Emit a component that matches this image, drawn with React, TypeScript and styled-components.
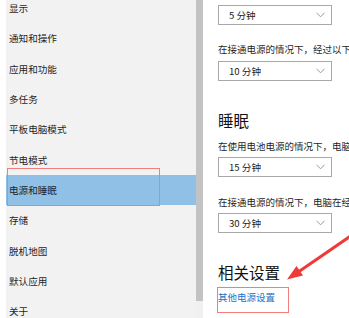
import styled, { createGlobalStyle } from "styled-components";

const GlobalStyle = createGlobalStyle`
  html, body {
    margin: 0;
    padding: 0;
    background: #fff;
  }
  body {
    font-family: "Noto Sans CJK SC", "Noto Sans", sans-serif;
    overflow: hidden;
  }
`;

const Page = styled.div`
  position: relative;
  display: flex;
  width: 349px;
  height: 318px;
  overflow: hidden;
  background: #fff;
`;

const Sidebar = styled.div`
  display: flex;
  flex-shrink: 0;
  height: 100%;
  padding-left: 6px;
  background: #fff;
`;

const NavList = styled.ul`
  list-style: none;
  margin: 0;
  padding: 0;
  width: 190px;
  height: 100%;
  background: #f2f2f2;
  display: flex;
  flex-direction: column;
`;

const NavItem = styled.li<{ $active?: boolean }>`
  flex-shrink: 0;
  height: 30.3px;
  display: flex;
  align-items: center;
  padding-left: 3px;
  font-size: 9.6px;
  color: #1f1f1f;
  background: ${({ $active }) => ($active ? "#90c0e6" : "transparent")};

  &:first-child {
    margin-top: -7px;
  }
`;

const ScrollTrack = styled.div`
  width: 7px;
  height: 100%;
  background: #f0f0f0;
`;

const ScrollThumb = styled.div`
  width: 100%;
  height: 301px;
  background: #c3c3c3;
`;

const Content = styled.div`
  flex: 1;
  min-width: 0;
  padding-left: 15px;
  display: flex;
  flex-direction: column;
  white-space: nowrap;
`;

const Dropdown = styled.div<{ $top: number }>`
  box-sizing: border-box;
  margin-top: ${({ $top }) => $top}px;
  width: 114px;
  height: 20px;
  flex-shrink: 0;
  border: 1.5px solid #a8a8a8;
  display: flex;
  align-items: center;
  justify-content: space-between;
  padding: 0 6px 0 10px;
  font-size: 9.6px;
  color: #222;
`;

const Desc = styled.div<{ $top: number }>`
  margin-top: ${({ $top }) => $top}px;
  height: 14px;
  line-height: 14px;
  font-size: 9.5px;
  color: #1f1f1f;
`;

const Heading = styled.h2`
  margin: 28px 0 0;
  height: 22px;
  line-height: 22px;
  font-size: 15.5px;
  font-weight: 400;
  color: #111;
`;

const Link = styled.a`
  margin-top: 7px;
  height: 14px;
  line-height: 14px;
  font-size: 9.5px;
  color: #1b6fc4;
  text-decoration: none;
`;

const Mark = styled.div<{ $x: number; $y: number; $w: number; $h: number }>`
  position: absolute;
  left: ${({ $x }) => $x}px;
  top: ${({ $y }) => $y}px;
  width: ${({ $w }) => $w}px;
  height: ${({ $h }) => $h}px;
  box-sizing: border-box;
  border: 1.5px solid #f17d7d;
  pointer-events: none;
`;

const Overlay = styled.svg`
  position: absolute;
  left: 0;
  top: 0;
  pointer-events: none;
`;

const Chevron = () => (
  <svg width="9" height="6" viewBox="0 0 9 6">
    <path d="M0.5 0.8 L4.5 4.8 L8.5 0.8" fill="none" stroke="#9a9a9a" strokeWidth="1" />
  </svg>
);

const nav = [
  "显示",
  "通知和操作",
  "应用和功能",
  "多任务",
  "平板电脑模式",
  "节电模式",
  "电源和睡眠",
  "存储",
  "脱机地图",
  "默认应用",
  "关于",
];

export default function App() {
  return (
    <>
      <GlobalStyle />
      <Page>
        <Sidebar>
          <NavList>
            {nav.map((label) => (
              <NavItem key={label} $active={label === "电源和睡眠"}>
                {label}
              </NavItem>
            ))}
          </NavList>
          <ScrollTrack>
            <ScrollThumb />
          </ScrollTrack>
        </Sidebar>

        <Content>
          <Dropdown $top={5}>
            5 分钟
            <Chevron />
          </Dropdown>
          <Desc $top={17}>在接通电源的情况下，经过以下</Desc>
          <Dropdown $top={5}>
            10 分钟
            <Chevron />
          </Dropdown>

          <Heading>睡眠</Heading>
          <Desc $top={8}>在使用电池电源的情况下，电脑</Desc>
          <Dropdown $top={4}>
            15 分钟
            <Chevron />
          </Dropdown>
          <Desc $top={18}>在接通电源的情况下，电脑在经</Desc>
          <Dropdown $top={4}>
            30 分钟
            <Chevron />
          </Dropdown>

          <Heading>相关设置</Heading>
          <Link href="#">其他电源设置</Link>
        </Content>

        <Mark $x={7} $y={168} $w={153} $h={38} />
        <Mark $x={217} $y={287} $w={72} $h={26} />

        <Overlay width="349" height="318" viewBox="0 0 349 318">
          <line x1="352" y1="235" x2="299" y2="271.5" stroke="#f03a3a" strokeWidth="3" strokeLinecap="round" />
          <polygon points="287,279.5 303,275.5 296.5,266" fill="#f03a3a" />
        </Overlay>
      </Page>
    </>
  );
}
